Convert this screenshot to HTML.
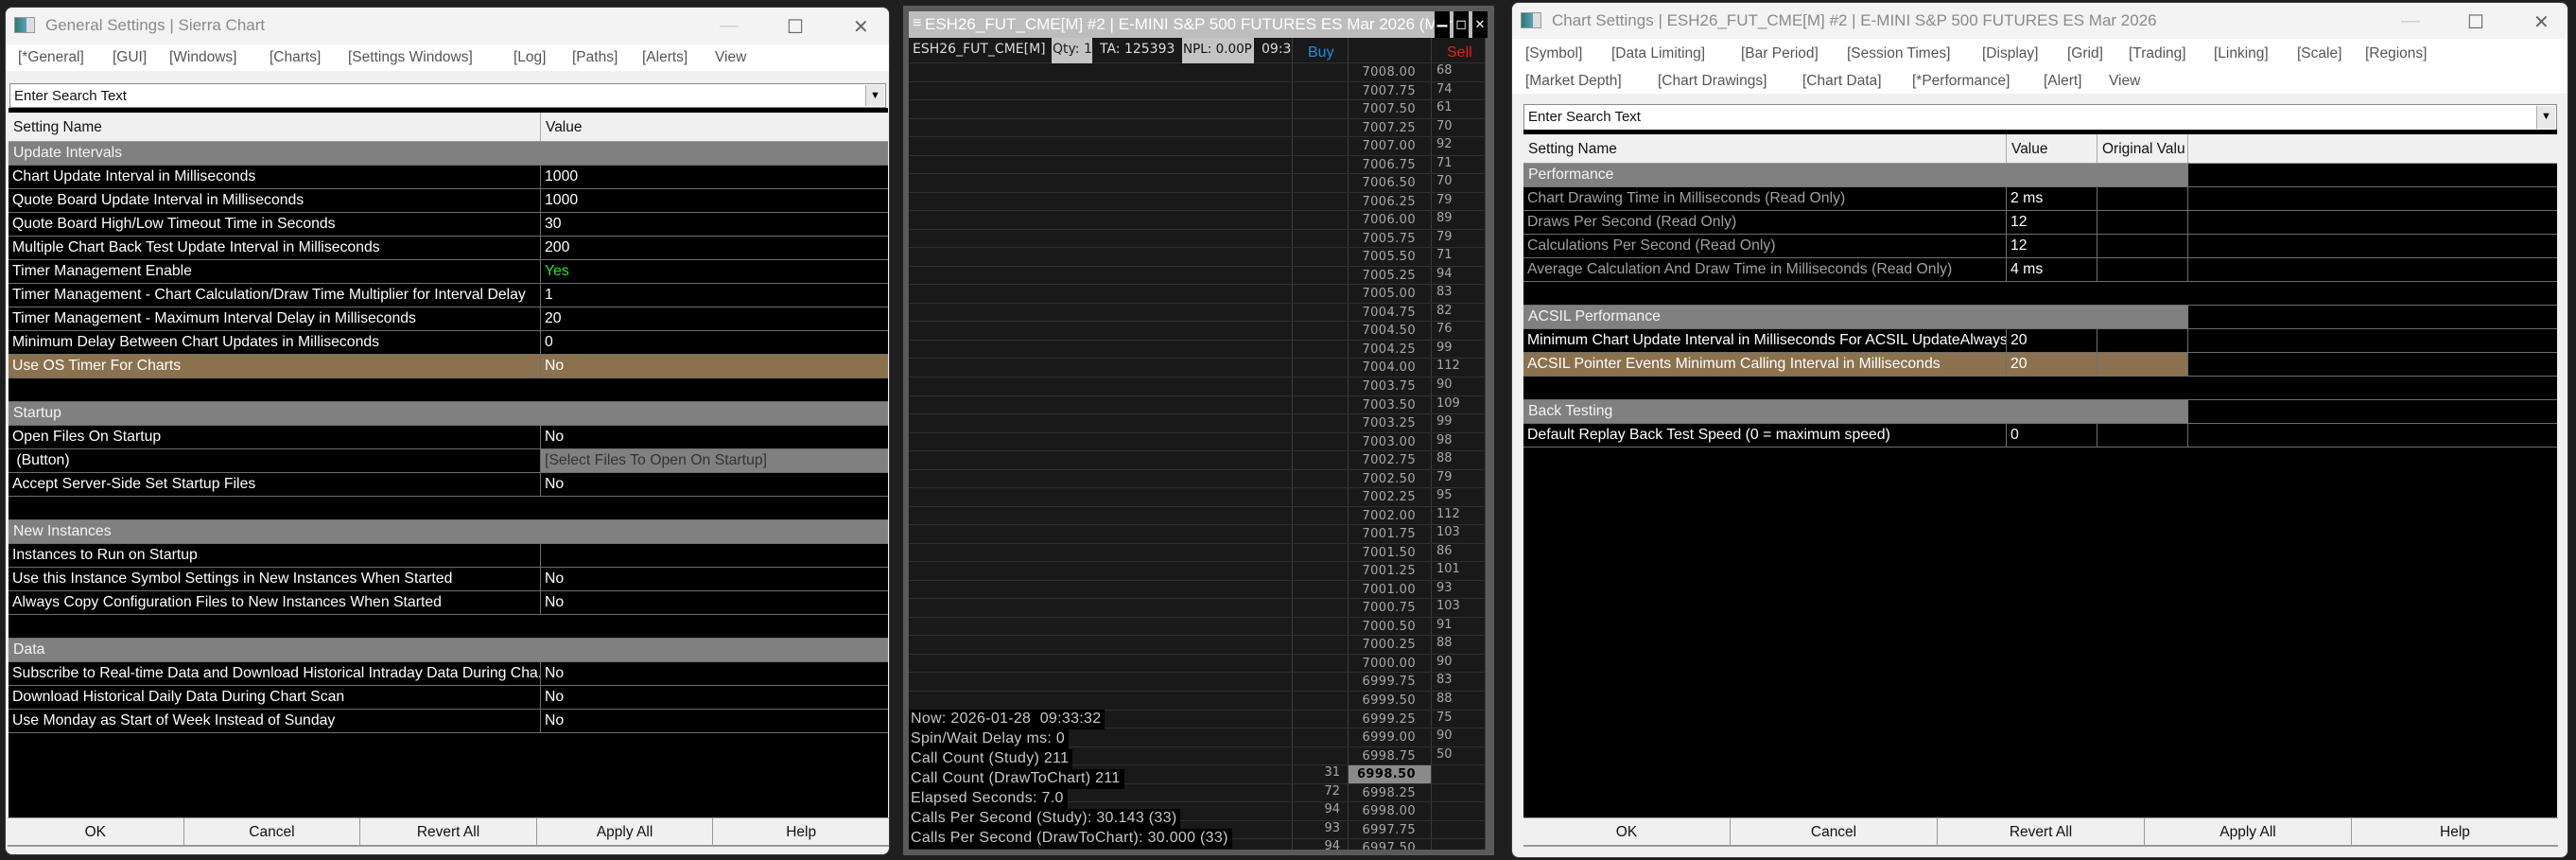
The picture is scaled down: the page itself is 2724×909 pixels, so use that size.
<!DOCTYPE html>
<html><head><meta charset="utf-8"><style>
*{box-sizing:border-box;margin:0;padding:0}
body{width:2724px;height:909px;background:#1f1f1f;position:relative;overflow:hidden;font-family:"Liberation Sans",Arial,sans-serif}
.win{position:absolute;background:#f0f0f0;border-radius:8px;overflow:hidden;border:1px solid #3a3a3a}
.tb{position:absolute;left:0;top:0;right:0;height:39px;background:#f3f3f3}
.ttl{position:absolute;left:42px;top:9px;font-size:17px;color:#8a8a8a;white-space:nowrap}
.ico{position:absolute;left:9px;top:10px;width:22px;height:17px;border:1px solid #999;background:linear-gradient(90deg,#2a7a6a,#5aa0c0 60%,#ddd 60%)}
.ctl{position:absolute;top:8px;font-size:20px;color:#666}
.menu{position:absolute;left:0;right:0;background:#fff}
.mi{position:absolute;font-size:15.5px;color:#555;white-space:nowrap}
.search{position:absolute;background:#fff;border:1px solid #8a8a8a;font-size:15px;color:#111;padding:4px 0 0 4px}
.dd{position:absolute;right:1px;top:1px;bottom:1px;width:20px;background:#e8e8e8;border-left:1px solid #aaa;font-size:11px;text-align:center;padding-top:5px;color:#000}
.tbl{position:absolute;background:#000;border-top:5px solid #000}
.hdr{height:31px;background:#f0f0f0;display:flex;font-size:15.5px;color:#111;border-bottom:1px solid #9a9a9a}
.hdr div{padding:7px 0 0 5px;border-right:1px solid #aaa}
.r{height:25px;display:flex;font-size:15.8px;color:#fff;border-bottom:1px solid #6e6e6e;white-space:nowrap}
.r div{padding:3px 0 0 4px;overflow:hidden;border-right:1px solid #6e6e6e}
.r div.f{flex:1;border-right:none}
.sec{background:#808080;color:#f4f4f4;padding:3px 0 0 5px !important;border-right:none !important}
.hl{background:#8b714e}
.ro{color:#a0a0a0}
.btns{position:absolute;display:flex;height:31px;background:#f0f0f0;border-top:1px solid #999}
.btns div{flex:1;text-align:center;font-size:15.5px;color:#111;padding-top:6px;border-right:1px solid #999;border-bottom:2px solid #999}
.mid{position:absolute;left:955px;top:6px;width:625px;height:898px;background:#5a5a5a}
.mt{position:absolute;left:6px;top:6px;width:612px;height:28px;background:#bdbdbd;color:#fff;font-size:17px;white-space:nowrap;overflow:hidden}
.mgrid{position:absolute;left:6px;top:34px;width:610px;height:858px;background:#191919;overflow:hidden;font-family:"DejaVu Sans",sans-serif}
.pr{position:absolute;left:0;width:610px;height:19.53px;border-bottom:1px solid #303030}
.pr span{position:absolute;top:2px;font-size:13px}
.p{right:74px;color:#a8a8a8;letter-spacing:.4px}
.s{left:558px;color:#a8a8a8;top:0 !important}
.b{right:154px;color:#a8a8a8}
.vl{position:absolute;top:0;bottom:0;width:1px;background:#3c3c3c}
.st{position:absolute;left:0;height:21px;background:#000;color:#c8c8c8;font-size:16px;padding:1px 4px 0 2px;white-space:nowrap;letter-spacing:.3px}
</style></head><body>

<div class="win" style="left:5px;top:7px;width:936px;height:897px">
 <div class="tb"><div class="ico"></div><div class="ttl">General Settings | Sierra Chart</div>
  <div class="ctl" style="left:755px;color:#ccc">—</div><div class="ctl" style="left:826px">☐</div><div class="ctl" style="left:896px">✕</div></div>
 <div class="menu" style="top:39px;height:28px">
  <div class="mi" style="left:13px;top:5px">[*General]</div><div class="mi" style="left:113px;top:5px">[GUI]</div><div class="mi" style="left:173px;top:5px">[Windows]</div><div class="mi" style="left:279px;top:5px">[Charts]</div><div class="mi" style="left:362px;top:5px">[Settings Windows]</div><div class="mi" style="left:537px;top:5px">[Log]</div><div class="mi" style="left:599px;top:5px">[Paths]</div><div class="mi" style="left:673px;top:5px">[Alerts]</div><div class="mi" style="left:750px;top:5px">View</div>
 </div>
 <div class="search" style="left:4px;top:80px;width:927px;height:26px">Enter Search Text<div class="dd">▼</div></div>
 <div class="tbl" style="left:3px;top:106px;width:930px;height:751px">
  <div class="hdr"><div style="width:563px">Setting Name</div><div style="flex:1;border:none">Value</div></div>
  <div class="r"><div class="sec" style="flex:1">Update Intervals</div></div>
  <div class="r"><div style="width:563px">Chart Update Interval in Milliseconds</div><div class="f">1000</div></div>
  <div class="r"><div style="width:563px">Quote Board Update Interval in Milliseconds</div><div class="f">1000</div></div>
  <div class="r"><div style="width:563px">Quote Board High/Low Timeout Time in Seconds</div><div class="f">30</div></div>
  <div class="r"><div style="width:563px">Multiple Chart Back Test Update Interval in Milliseconds</div><div class="f">200</div></div>
  <div class="r"><div style="width:563px">Timer Management Enable</div><div class="f" style="color:#2ee02e">Yes</div></div>
  <div class="r"><div style="width:563px">Timer Management - Chart Calculation/Draw Time Multiplier for Interval Delay</div><div class="f">1</div></div>
  <div class="r"><div style="width:563px">Timer Management - Maximum Interval Delay in Milliseconds</div><div class="f">20</div></div>
  <div class="r"><div style="width:563px">Minimum Delay Between Chart Updates in Milliseconds</div><div class="f">0</div></div>
  <div class="r hl"><div style="width:563px">Use OS Timer For Charts</div><div class="f">No</div></div>
  <div class="r"></div>
  <div class="r"><div class="sec" style="flex:1">Startup</div></div>
  <div class="r"><div style="width:563px">Open Files On Startup</div><div class="f">No</div></div>
  <div class="r"><div style="width:563px">&nbsp;(Button)</div><div class="f" style="background:#808080;color:#333">[Select Files To Open On Startup]</div></div>
  <div class="r"><div style="width:563px">Accept Server-Side Set Startup Files</div><div class="f">No</div></div>
  <div class="r"></div>
  <div class="r"><div class="sec" style="flex:1">New Instances</div></div>
  <div class="r"><div style="width:563px">Instances to Run on Startup</div><div class="f"></div></div>
  <div class="r"><div style="width:563px">Use this Instance Symbol Settings in New Instances When Started</div><div class="f">No</div></div>
  <div class="r"><div style="width:563px">Always Copy Configuration Files to New Instances When Started</div><div class="f">No</div></div>
  <div class="r"></div>
  <div class="r"><div class="sec" style="flex:1">Data</div></div>
  <div class="r"><div style="width:563px">Subscribe to Real-time Data and Download Historical Intraday Data During Cha...</div><div class="f">No</div></div>
  <div class="r"><div style="width:563px">Download Historical Daily Data During Chart Scan</div><div class="f">No</div></div>
  <div class="r"><div style="width:563px">Use Monday as Start of Week Instead of Sunday</div><div class="f">No</div></div>
 </div>
 <div class="btns" style="left:2px;top:856px;width:932px"><div>OK</div><div>Cancel</div><div>Revert All</div><div>Apply All</div><div style="border-right:none">Help</div></div>
</div>

<div class="mid">
 <div class="mt"><span style="position:absolute;left:4px;top:4px;font-size:16px">≡</span><span style="position:absolute;left:17px;top:4px">ESH26_FUT_CME[M] #2 | E-MINI S&amp;P 500 FUTURES ES Mar 2026 (Mar</span>
  <div style="position:absolute;left:556px;top:0;width:16px;height:28px;background:#000;color:#fff;font-size:14px;text-align:center">▁</div>
  <div style="position:absolute;left:576px;top:0;width:16px;height:28px;background:#000;color:#fff;font-size:14px;text-align:center;padding-top:5px">◻</div>
  <div style="position:absolute;left:596px;top:0;width:16px;height:28px;background:#000;color:#fff;font-size:13px;text-align:center;padding-top:6px">✕</div>
 </div>
 <div class="mgrid">
  <div style="position:absolute;left:0;top:0;width:610px;height:27px;border-bottom:1px solid #303030;font-size:14px;color:#ddd;font-family:'DejaVu Sans',sans-serif;white-space:nowrap">
   <span style="position:absolute;left:4px;top:4px">ESH26_FUT_CME[M]</span>
   <span style="position:absolute;left:151px;top:0;width:43px;height:27px;background:#c4c4c4;color:#222;padding:4px 0 0 1px;overflow:hidden">Qty: 1</span>
   <span style="position:absolute;left:202px;top:4px">TA: 125393</span>
   <span style="position:absolute;left:289px;top:0;width:76px;height:27px;background:#c4c4c4;color:#111;padding:4px 0 0 1px;overflow:hidden;font-size:13.5px">NPL: 0.00P</span>
   <span style="position:absolute;left:373px;top:4px;width:32px;overflow:hidden">09:3</span>
   <span style="position:absolute;left:422px;top:7px;color:#1e90e0;font-family:'Liberation Sans',sans-serif;font-size:16px">Buy</span>
   <span style="position:absolute;left:569px;top:7px;color:#e02020;font-family:'Liberation Sans',sans-serif;font-size:16px">Sell</span>
  </div>
  <div class="vl" style="left:405px"></div><div class="vl" style="left:464px"></div><div class="vl" style="left:552px"></div><div class="vl" style="left:609px"></div>
  <div style="position:absolute;left:0;top:27px;width:610px">
<div class="pr" style="top:0.0px"><span class="p">7008.00</span><span class="s">68</span></div>
<div class="pr" style="top:19.53px"><span class="p">7007.75</span><span class="s">74</span></div>
<div class="pr" style="top:39.06px"><span class="p">7007.50</span><span class="s">61</span></div>
<div class="pr" style="top:58.59px"><span class="p">7007.25</span><span class="s">70</span></div>
<div class="pr" style="top:78.12px"><span class="p">7007.00</span><span class="s">92</span></div>
<div class="pr" style="top:97.65px"><span class="p">7006.75</span><span class="s">71</span></div>
<div class="pr" style="top:117.18px"><span class="p">7006.50</span><span class="s">70</span></div>
<div class="pr" style="top:136.71px"><span class="p">7006.25</span><span class="s">79</span></div>
<div class="pr" style="top:156.24px"><span class="p">7006.00</span><span class="s">89</span></div>
<div class="pr" style="top:175.77px"><span class="p">7005.75</span><span class="s">79</span></div>
<div class="pr" style="top:195.3px"><span class="p">7005.50</span><span class="s">71</span></div>
<div class="pr" style="top:214.83px"><span class="p">7005.25</span><span class="s">94</span></div>
<div class="pr" style="top:234.36px"><span class="p">7005.00</span><span class="s">83</span></div>
<div class="pr" style="top:253.89px"><span class="p">7004.75</span><span class="s">82</span></div>
<div class="pr" style="top:273.42px"><span class="p">7004.50</span><span class="s">76</span></div>
<div class="pr" style="top:292.95px"><span class="p">7004.25</span><span class="s">99</span></div>
<div class="pr" style="top:312.48px"><span class="p">7004.00</span><span class="s">112</span></div>
<div class="pr" style="top:332.01px"><span class="p">7003.75</span><span class="s">90</span></div>
<div class="pr" style="top:351.54px"><span class="p">7003.50</span><span class="s">109</span></div>
<div class="pr" style="top:371.07px"><span class="p">7003.25</span><span class="s">99</span></div>
<div class="pr" style="top:390.6px"><span class="p">7003.00</span><span class="s">98</span></div>
<div class="pr" style="top:410.13px"><span class="p">7002.75</span><span class="s">88</span></div>
<div class="pr" style="top:429.66px"><span class="p">7002.50</span><span class="s">79</span></div>
<div class="pr" style="top:449.19px"><span class="p">7002.25</span><span class="s">95</span></div>
<div class="pr" style="top:468.72px"><span class="p">7002.00</span><span class="s">112</span></div>
<div class="pr" style="top:488.25px"><span class="p">7001.75</span><span class="s">103</span></div>
<div class="pr" style="top:507.78px"><span class="p">7001.50</span><span class="s">86</span></div>
<div class="pr" style="top:527.31px"><span class="p">7001.25</span><span class="s">101</span></div>
<div class="pr" style="top:546.84px"><span class="p">7001.00</span><span class="s">93</span></div>
<div class="pr" style="top:566.37px"><span class="p">7000.75</span><span class="s">103</span></div>
<div class="pr" style="top:585.9px"><span class="p">7000.50</span><span class="s">91</span></div>
<div class="pr" style="top:605.43px"><span class="p">7000.25</span><span class="s">88</span></div>
<div class="pr" style="top:624.96px"><span class="p">7000.00</span><span class="s">90</span></div>
<div class="pr" style="top:644.49px"><span class="p">6999.75</span><span class="s">83</span></div>
<div class="pr" style="top:664.02px"><span class="p">6999.50</span><span class="s">88</span></div>
<div class="pr" style="top:683.55px"><span class="p">6999.25</span><span class="s">75</span></div>
<div class="pr" style="top:703.08px"><span class="p">6999.00</span><span class="s">90</span></div>
<div class="pr" style="top:722.61px"><span class="p">6998.75</span><span class="s">50</span></div>
<div class="pr" style="top:742.14px"><span style="left:465px;width:87px;height:19px;top:0;background:#8a8a8a"></span><span class="p" style="color:#000;font-weight:bold">6998.50</span><span class="b" style="top:0">31</span></div>
<div class="pr" style="top:761.67px"><span class="p">6998.25</span><span class="b" style="top:0">72</span></div>
<div class="pr" style="top:781.2px"><span class="p">6998.00</span><span class="b" style="top:0">94</span></div>
<div class="pr" style="top:800.73px"><span class="p">6997.75</span><span class="b" style="top:0">93</span></div>
<div class="pr" style="top:820.26px"><span class="p">6997.50</span><span class="b" style="top:0">94</span></div>
  </div>
  <div style="font-family:'Liberation Sans',sans-serif">
  <div class="st" style="top:710px">Now: 2026-01-28&nbsp; 09:33:32</div>
  <div class="st" style="top:731px">Spin/Wait Delay ms: 0</div>
  <div class="st" style="top:752px">Call Count (Study) 211</div>
  <div class="st" style="top:773px">Call Count (DrawToChart) 211</div>
  <div class="st" style="top:794px">Elapsed Seconds: 7.0</div>
  <div class="st" style="top:815px">Calls Per Second (Study): 30.143 (33)</div>
  <div class="st" style="top:836px">Calls Per Second (DrawToChart): 30.000 (33)</div>
  </div>
 </div>
</div>

<div class="win" style="left:1598px;top:2px;width:1118px;height:905px">
 <div class="tb"><div class="ico" style="top:10px"></div><div class="ttl" style="left:42px;top:9px">Chart Settings | ESH26_FUT_CME[M] #2 | E-MINI S&amp;P 500 FUTURES ES Mar 2026</div>
  <div class="ctl" style="left:940px;color:#ccc">—</div><div class="ctl" style="left:1010px">☐</div><div class="ctl" style="left:1080px">✕</div></div>
 <div class="menu" style="top:38px;height:58px">
  <div class="mi" style="left:14px;top:7px">[Symbol]</div><div class="mi" style="left:105px;top:7px">[Data Limiting]</div><div class="mi" style="left:242px;top:7px">[Bar Period]</div><div class="mi" style="left:354px;top:7px">[Session Times]</div><div class="mi" style="left:497px;top:7px">[Display]</div><div class="mi" style="left:587px;top:7px">[Grid]</div><div class="mi" style="left:652px;top:7px">[Trading]</div><div class="mi" style="left:742px;top:7px">[Linking]</div><div class="mi" style="left:830px;top:7px">[Scale]</div><div class="mi" style="left:902px;top:7px">[Regions]</div>
  <div class="mi" style="left:14px;top:36px">[Market Depth]</div><div class="mi" style="left:154px;top:36px">[Chart Drawings]</div><div class="mi" style="left:307px;top:36px">[Chart Data]</div><div class="mi" style="left:423px;top:36px">[*Performance]</div><div class="mi" style="left:562px;top:36px">[Alert]</div><div class="mi" style="left:631px;top:36px">View</div>
 </div>
 <div class="search" style="left:12px;top:107px;width:1093px;height:28px">Enter Search Text<div class="dd">▼</div></div>
 <div class="tbl" style="left:12px;top:134px;width:1093px;height:728px">
  <div class="hdr"><div style="width:511px">Setting Name</div><div style="width:96px">Value</div><div style="width:96px;white-space:nowrap;overflow:hidden">Original Valu</div><div style="flex:1;border:none"></div></div>
  <div class="r"><div class="sec" style="width:703px">Performance</div></div>
  <div class="r ro"><div style="width:511px">Chart Drawing Time in Milliseconds (Read Only)</div><div style="width:96px;color:#fff">2 ms</div><div style="width:96px"></div></div>
  <div class="r ro"><div style="width:511px">Draws Per Second (Read Only)</div><div style="width:96px;color:#fff">12</div><div style="width:96px"></div></div>
  <div class="r ro"><div style="width:511px">Calculations Per Second (Read Only)</div><div style="width:96px;color:#fff">12</div><div style="width:96px"></div></div>
  <div class="r ro"><div style="width:511px">Average Calculation And Draw Time in Milliseconds (Read Only)</div><div style="width:96px;color:#fff">4 ms</div><div style="width:96px"></div></div>
  <div class="r"></div>
  <div class="r"><div class="sec" style="width:703px">ACSIL Performance</div></div>
  <div class="r"><div style="width:511px">Minimum Chart Update Interval in Milliseconds For ACSIL UpdateAlways</div><div style="width:96px">20</div><div style="width:96px"></div></div>
  <div class="r"><div class="hl" style="width:511px">ACSIL Pointer Events Minimum Calling Interval in Milliseconds</div><div class="hl" style="width:96px">20</div><div class="hl" style="width:96px"></div></div>
  <div class="r"></div>
  <div class="r"><div class="sec" style="width:703px">Back Testing</div></div>
  <div class="r"><div style="width:511px">Default Replay Back Test Speed (0 = maximum speed)</div><div style="width:96px">0</div><div style="width:96px"></div></div>
 </div>
 <div class="btns" style="left:12px;top:861px;width:1094px"><div>OK</div><div>Cancel</div><div>Revert All</div><div>Apply All</div><div style="border-right:none">Help</div></div>
</div>
</body></html>
